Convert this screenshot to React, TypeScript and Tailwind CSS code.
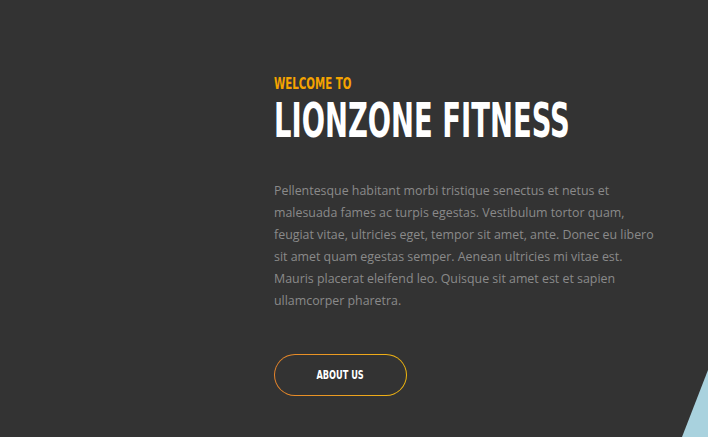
export default function App() {
  const cond = { fontFamily: '"DejaVu Sans Condensed", "DejaVu Sans", sans-serif' };
  return (
    <div className="relative w-[708px] h-[437px] overflow-hidden bg-[#333333]">
      <div className="pl-[274px] pt-[74px] flex flex-col items-start">
        <div style={cond} className="whitespace-nowrap origin-left scale-x-[0.71] text-[16px] leading-[20px] font-bold text-[#f5a300]">WELCOME TO</div>
        <h1 style={cond} className="whitespace-nowrap origin-left scale-x-[0.635] mt-[1px] text-[48px] leading-[50px] font-bold text-white">LIONZONE FITNESS</h1>
        <p style={{ fontFamily: '"Open Sans", sans-serif' }} className="mt-[35px] whitespace-nowrap text-[12.4px] leading-[22px] text-[#8a8a8a]">
          Pellentesque habitant morbi tristique senectus et netus et<br />
          malesuada fames ac turpis egestas. Vestibulum tortor quam,<br />
          feugiat vitae, ultricies eget, tempor sit amet, ante. Donec eu libero<br />
          sit amet quam egestas semper. Aenean ultricies mi vitae est.<br />
          Mauris placerat eleifend leo. Quisque sit amet est et sapien<br />
          ullamcorper pharetra.
        </p>
        <div className="mt-[42px] p-px rounded-full bg-gradient-to-r from-[#e5832a] to-[#f0b70c]">
          <div className="w-[131px] h-[40px] rounded-full bg-[#333333] flex items-center justify-center">
            <span style={cond} className="whitespace-nowrap scale-x-[0.76] text-[12px] font-bold text-white">ABOUT US</span>
          </div>
        </div>
      </div>
      <svg className="absolute right-0 bottom-0" width="26" height="67" viewBox="0 0 26 67">
        <polygon points="26,0 26,67 0,67" fill="#a9d2de" />
      </svg>
    </div>
  );
}
